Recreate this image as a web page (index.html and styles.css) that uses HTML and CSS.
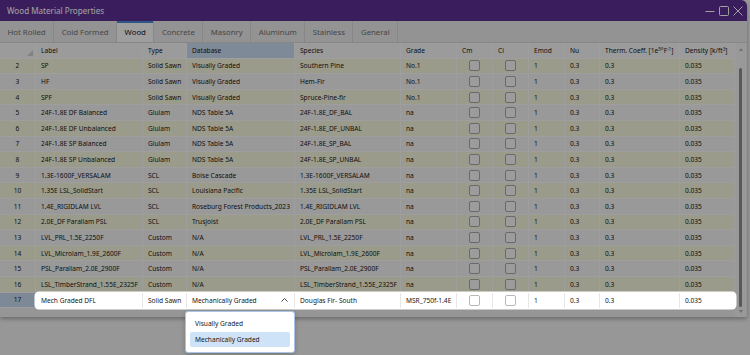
FILE: index.html
```html
<!DOCTYPE html>
<html lang="en">
<head>
  <meta charset="UTF-8">
  <meta name="viewport" content="width=device-width, initial-scale=1.0">
  <title>Wood Material Properties</title>
  <link rel="stylesheet" href="styles.css">
</head>
<body>
  <div class="screen">
    <div class="window">
      <div class="titlebar">
        <span class="title">Wood Material Properties</span>
        <div class="controls">
          <svg viewBox="0 0 10 10"><line x1="0.5" y1="5.5" x2="9.5" y2="5.5"/></svg>
          <svg viewBox="0 0 10 10"><rect x="0.5" y="0.5" width="9" height="9" rx="1"/></svg>
          <svg viewBox="0 0 10 10"><path d="M0.5 0.5 L9.5 9.5 M9.5 0.5 L0.5 9.5"/></svg>
        </div>
      </div>

      <div class="tabs">
        <div class="tab">Hot Rolled</div>
        <div class="tab">Cold Formed</div>
        <div class="tab active">Wood</div>
        <div class="tab">Concrete</div>
        <div class="tab">Masonry</div>
        <div class="tab">Aluminum</div>
        <div class="tab">Stainless</div>
        <div class="tab">General</div>
      </div>

      <div class="table-area">
        <div class="grid" id="grid">
          <div class="row head">
            <div class="cell num corner"></div>
            <div class="cell">Label</div>
            <div class="cell">Type</div>
            <div class="cell sorted">Database</div>
            <div class="cell">Species</div>
            <div class="cell">Grade</div>
            <div class="cell">Cm</div>
            <div class="cell">Ci</div>
            <div class="cell">Emod</div>
            <div class="cell">Nu</div>
            <div class="cell">Therm. Coeff. [1e<sup>5</sup>°F<sup>-1</sup>]</div>
            <div class="cell">Density [k/ft<sup>3</sup>]</div>
          </div>

          <div class="row editing" id="edit-row">
            <div class="cell num">17</div>
            <div class="editor">
              <div class="cell">Mech Graded DFL</div>
              <div class="cell">Solid Sawn</div>
              <div class="cell combo">Mechanically Graded
                <svg class="chevron" viewBox="0 0 7 4"><polyline points="0.5,3.5 3.5,0.5 6.5,3.5"/></svg>
              </div>
              <div class="cell">Douglas Fir- South</div>
              <div class="cell">MSR_750f-1.4E</div>
              <div class="cell check"><span class="box"></span></div>
              <div class="cell check"><span class="box"></span></div>
              <div class="cell">1</div>
              <div class="cell">0.3</div>
              <div class="cell">0.3</div>
              <div class="cell">0.035</div>
            </div>
          </div>
        </div>

        <div class="vscroll">
          <span class="arrow up"></span>
          <span class="thumb"></span>
          <span class="arrow down"></span>
        </div>
      </div>
    </div>

    <div class="dim"></div>

    <div class="dropdown">
      <div class="option">Visually Graded</div>
      <div class="option selected">Mechanically Graded</div>
    </div>
  </div>

  <script>
    const materials = [
      ["SP", "Solid Sawn", "Visually Graded", "Southern Pine", "No.1"],
      ["HF", "Solid Sawn", "Visually Graded", "Hem-Fir", "No.1"],
      ["SPF", "Solid Sawn", "Visually Graded", "Spruce-Pine-fir", "No.1"],
      ["24F-1.8E DF Balanced", "Glulam", "NDS Table 5A", "24F-1.8E_DF_BAL", "na"],
      ["24F-1.8E DF Unbalanced", "Glulam", "NDS Table 5A", "24F-1.8E_DF_UNBAL", "na"],
      ["24F-1.8E SP Balanced", "Glulam", "NDS Table 5A", "24F-1.8E_SP_BAL", "na"],
      ["24F-1.8E SP Unbalanced", "Glulam", "NDS Table 5A", "24F-1.8E_SP_UNBAL", "na"],
      ["1.3E-1600F_VERSALAM", "SCL", "Boise Cascade", "1.3E-1600F_VERSALAM", "na"],
      ["1.35E LSL_SolidStart", "SCL", "Louisiana Pacific", "1.35E LSL_SolidStart", "na"],
      ["1.4E_RIGIDLAM LVL", "SCL", "Roseburg Forest Products_2023", "1.4E_RIGIDLAM LVL", "na"],
      ["2.0E_DF Parallam PSL", "SCL", "TrusJoist", "2.0E_DF Parallam PSL", "na"],
      ["LVL_PRL_1.5E_2250F", "Custom", "N/A", "LVL_PRL_1.5E_2250F", "na"],
      ["LVL_Microlam_1.9E_2600F", "Custom", "N/A", "LVL_Microlam_1.9E_2600F", "na"],
      ["PSL_Parallam_2.0E_2900F", "Custom", "N/A", "PSL_Parallam_2.0E_2900F", "na"],
      ["LSL_TimberStrand_1.55E_2325F", "Custom", "N/A", "LSL_TimberStrand_1.55E_2325F", "na"]
    ];

    const grid = document.getElementById("grid");
    const editRow = document.getElementById("edit-row");
    const checkCell = '<div class="cell check"><span class="box"></span></div>';

    materials.forEach((m, i) => {
      const n = i + 2;
      const row = document.createElement("div");
      row.className = n % 2 === 0 ? "row alt" : "row";
      row.innerHTML =
        `<div class="cell num">${n}</div>` +
        m.map(v => `<div class="cell">${v}</div>`).join("") +
        checkCell + checkCell +
        ["1", "0.3", "0.3", "0.035"].map(v => `<div class="cell">${v}</div>`).join("");
      grid.insertBefore(row, editRow);
    });
  </script>
</body>
</html>
```

FILE: styles.css
```css
* {
  box-sizing: border-box;
}

body {
  margin: 0;
  width: 750px;
  height: 355px;
  overflow: hidden;
  background: #f0f0f0;
  font-family: "Noto Sans", "Open Sans", sans-serif;
  color: #161616;
}

.screen {
  position: relative;
  height: 355px;
}

.window {
  width: 747px;
  height: 317px;
  background: #eeeeee;
  border-radius: 0 6px 0 0;
  box-shadow: 0 2px 4px rgba(0, 0, 0, 0.3);
  display: flex;
  flex-direction: column;
}

.titlebar {
  height: 21px;
  flex: none;
  background: #5d2f92;
  color: #fff;
  display: flex;
  align-items: center;
  padding: 0 4px 0 7px;
  font-size: 8.1px;
  border-radius: 0 6px 0 0;
}

.controls {
  margin-left: auto;
  display: flex;
  gap: 4px;
}

.controls svg {
  width: 10px;
  height: 10px;
  stroke: #fff;
  fill: none;
  stroke-width: 1;
}

.tabs {
  height: 22px;
  flex: none;
  display: flex;
  background: #e9e9e9;
  border-bottom: 1px solid #d6d6d6;
  font-size: 7.8px;
  color: #707070;
}

.tab {
  display: flex;
  align-items: center;
  padding: 0 7.5px;
  border-right: 1px solid #d6d6d6;
}

.tab.active {
  background: #fbfbfb;
  color: #111;
  box-shadow: inset 0 2px #4a8ad4;
}

.table-area {
  flex: 1;
  display: flex;
}

.grid {
  width: 735px;
}

.row {
  display: grid;
  grid-template-columns: 36px 107px 44px 108px 106px 56px 36px 36px 36px 35px 80px 55px;
  height: 15.6px;
  background: #f2f2f2;
  font-size: 6.6px;
}

.row.alt {
  background: #f6f6dc;
}

.cell {
  display: flex;
  align-items: center;
  padding-left: 5px;
  border-right: 1px solid #fbfbfb;
  border-bottom: 1px solid #fbfbfb;
  white-space: nowrap;
  overflow: hidden;
}

.cell sup {
  font-size: 4.5px;
  align-self: flex-start;
  margin-top: 3px;
}

.cell.num,
.cell.check {
  justify-content: center;
  padding-left: 0;
}

.box {
  width: 11px;
  height: 11px;
  border: 1px solid #a8a8a8;
  border-radius: 2px;
  background: #f8f8f8;
}

.row.head {
  background: #f5f5f5;
}

.head .cell.sorted {
  background: #c8dbf1;
}

.corner {
  position: relative;
}

.corner::after {
  content: "";
  position: absolute;
  right: 2px;
  bottom: 2px;
  border: 3px solid transparent;
  border-right-color: #cfcfcf;
  border-bottom-color: #cfcfcf;
}

/* row being edited sits above the modal dim */
.row.editing {
  background: transparent;
}

.editing .num {
  background: #c6d9ef;
}

.editor {
  grid-column: 2 / -1;
  display: grid;
  grid-template-columns: 107px 44px 108px 106px 56px 36px 36px 36px 35px 80px 55px;
  background: #fff;
  border-radius: 3px;
  position: relative;
  z-index: 2;
  box-shadow: 0 0 0 1.5px #fff;
}

.editor .cell {
  border-bottom: none;
  border-right-color: #e6e6e6;
}

.editor .cell:last-child {
  border-right: none;
}

.editor .box {
  background: #fff;
  border-color: #b8b8b8;
}

.cell.combo {
  justify-content: space-between;
  padding-right: 6px;
}

.chevron {
  width: 7px;
  height: 4px;
  fill: none;
  stroke: #333;
  stroke-width: 0.9;
}

.vscroll {
  width: 11px;
  display: flex;
  flex-direction: column;
  align-items: center;
  padding: 5px 0 4px;
  background: #f2f2f2;
}

.arrow {
  width: 0;
  height: 0;
  border-left: 2.5px solid transparent;
  border-right: 2.5px solid transparent;
}

.arrow.up {
  border-bottom: 3px solid #b0b0b0;
}

.arrow.down {
  border-top: 3px solid #b0b0b0;
}

.thumb {
  flex: 1;
  width: 3px;
  margin: 17px 0 3px;
  border-radius: 2px;
  background: #8c8c8c;
}

.dim {
  position: absolute;
  inset: 0;
  background: rgba(0, 0, 0, 0.37);
  z-index: 1;
}

.dropdown {
  position: absolute;
  left: 185px;
  top: 311px;
  width: 110px;
  height: 42px;
  padding: 4px;
  background: #fff;
  border: 1px solid #a9c4e6;
  border-radius: 3px;
  box-shadow: 0 2px 5px rgba(0, 0, 0, 0.2);
  z-index: 3;
  display: flex;
  flex-direction: column;
  gap: 1px;
  font-size: 6.6px;
}

.option {
  height: 15px;
  display: flex;
  align-items: center;
  padding-left: 5px;
  border-radius: 2px;
}

.option.selected {
  background: #cfe3f8;
}
```
